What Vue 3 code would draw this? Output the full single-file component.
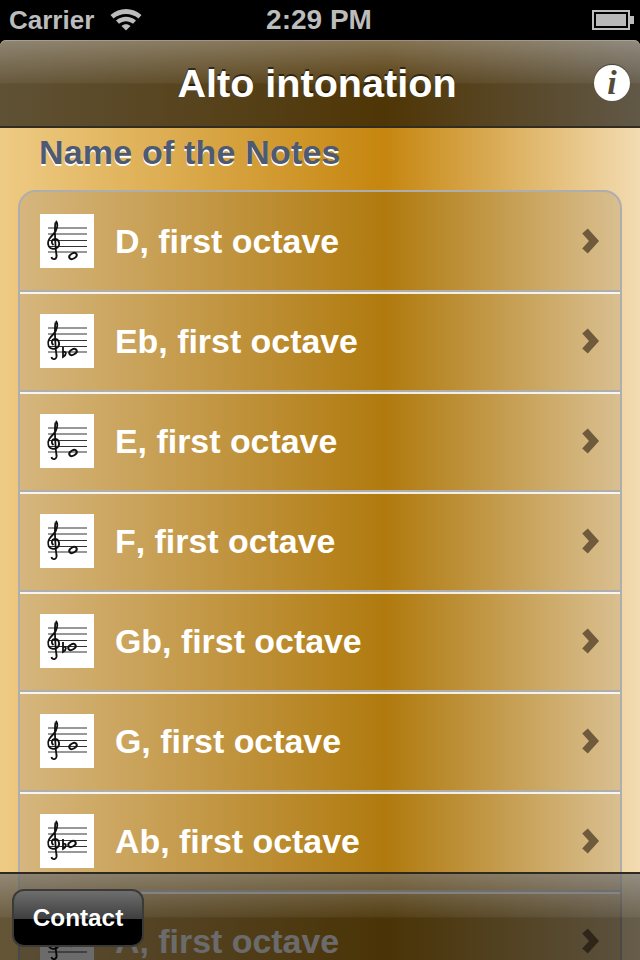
<template>
  <div class="screen">
    <div class="statusbar">
      <div class="carrier">
        <span>Carrier</span>
        <svg class="wifi" width="32" height="24" viewBox="0 0 32 24">
          <path d="M0.500 8C9 0 23 0 31.500 8L28.500 11.500C21.500 5.500 10.500 5.500 3.500 11.500Z" />
          <path d="M6 13.500C12 8.500 20 8.500 26 13.500L23 16.800C18.800 13.300 13.200 13.300 9 16.800Z" />
          <path d="M11.500 19C14.300 16.800 17.700 16.800 20.500 19L16 23.500Z" />
        </svg>
      </div>
      <div class="clock">2:29 PM</div>
      <div class="battery"><div class="shell"><span class="level"></span></div><span class="tip"></span></div>
    </div>

    <header class="navbar">
      <h1>Alto intonation</h1>
      <div class="info">i</div>
    </header>

    <main class="content">
      <div class="heading">Name of the Notes</div>
      <ul class="table">
        <li v-for="note in notes" :key="note.name" class="row">
          <div class="thumb">
            <svg width="54" height="54" viewBox="0 0 54 54">
              <g stroke="#333" stroke-width="1.200">
                <line v-for="y in staff" :key="y" x1="8" x2="47" :y1="y" :y2="y" />
              </g>
              <path class="clef" d="M16.500 40C17.500 46 12 46.500 11.500 43M15.500 8.500C14.500 13 15 30 16.500 42M15.800 7C19 10 16.500 17 13.500 20C9.500 24 7 27 8.500 31.500C10 35.500 15.500 36 18 33C20.500 30 18.500 24.500 14.500 25C11.500 25.500 10.800 29 13.500 31" />
              <path v-if="note.flat" class="flat" :d="`M${note.flatX} ${note.y - 5}V${note.y + 5}C${note.flatX + 3.500} ${note.y + 3} ${note.flatX + 4} ${note.y - 1} ${note.flatX} ${note.y}`" />
              <ellipse class="head" :cx="note.x" :cy="note.y" rx="4" ry="2.600" :transform="`rotate(-30 ${note.x} ${note.y})`" />
            </svg>
          </div>
          <span class="label">{{ note.name }}</span>
          <svg class="chevron" width="20" height="28" viewBox="0 0 20 28">
            <path d="M5 4L14 14L5 24" />
          </svg>
        </li>
      </ul>
    </main>

    <footer class="toolbar">
      <button class="contact">Contact</button>
    </footer>
  </div>
</template>

<script setup>
// top and bottom staff lines sit between pixels, the scaled image blurs them
const staff = [14, 20, 26.5, 32.5, 38]

const notes = [
  { name: 'D, first octave', x: 33, y: 42 },
  { name: 'Eb, first octave', x: 33, y: 38, flat: true, flatX: 23 },
  { name: 'E, first octave', x: 33, y: 39 },
  { name: 'F, first octave', x: 33, y: 36 },
  { name: 'Gb, first octave', x: 32, y: 33, flat: true, flatX: 23 },
  { name: 'G, first octave', x: 33, y: 32 },
  { name: 'Ab, first octave', x: 32, y: 30, flat: true, flatX: 23 },
  { name: 'A, first octave', x: 33, y: 29 }
]
</script>

<style>
html, body { margin: 0; background: #000; }
</style>

<style scoped>
.screen { position: relative; width: 640px; height: 960px; overflow: hidden; background: #000; font-family: "Liberation Sans", Arial, sans-serif; }

.statusbar { height: 40px; display: grid; grid-template-columns: 1fr auto 1fr; align-items: center; padding: 0 8px; box-sizing: border-box; color: #bcbcbc; font-size: 28px; font-weight: 700; }
.carrier { display: flex; align-items: center; gap: 16px; margin-left: 1px; font-size: 26px; }
.wifi { fill: #bcbcbc; margin-top: -2px; }
.clock { margin-left: -2px; }
.battery { justify-self: end; display: flex; align-items: center; margin-right: -2px; }
.shell { width: 38px; height: 20px; box-sizing: border-box; border: 2px solid #bcbcbc; padding: 2px; }
.level { display: block; height: 100%; background: #b8b8b8; }
.tip { display: block; width: 4px; height: 8px; background: #bcbcbc; }

.navbar { height: 88px; box-sizing: border-box; display: flex; align-items: center; justify-content: center; position: relative; border-radius: 6px 6px 0 0; border-bottom: 2px solid #332c20; box-shadow: inset 0 1px 0 rgba(255,255,255,.22); background: linear-gradient(180deg, rgba(255,255,255,.3) 0, rgba(255,255,255,.05) 50%, rgba(255,255,255,0) 51%), linear-gradient(rgba(0,0,0,.6), rgba(0,0,0,.6)), linear-gradient(90deg, #eecb84 0, #c6860f 60%, #f3dcb2 100%); }
h1 { margin: 0 6px -2px 0; color: #fff; font-size: 39.600px; font-weight: 700; line-height: 1; text-shadow: 0 -2px 0 rgba(0,0,0,.55); }
.info { position: absolute; right: 10px; top: 25px; width: 36px; height: 36px; border-radius: 50%; background: #fff; box-shadow: 0 -1px 1px rgba(0,0,0,.4); color: #544a38; font-family: "Liberation Serif", serif; font-style: italic; font-weight: 700; font-size: 34px; line-height: 36px; text-align: center; }

.content { height: 832px; overflow: hidden; background: linear-gradient(90deg, #eecb84 0, #c6860f 60%, #f3dcb2 100%); }
.heading { height: 62px; padding: 4px 0 0 39px; box-sizing: border-box; color: #4d5a72; font-size: 34px; font-weight: 700; line-height: 40px; letter-spacing: .18px; text-shadow: 0 2px 0 #fff; }
.table { list-style: none; margin: 0 18px; padding: 0; border: 2px solid #aeaeae; border-radius: 18px; overflow: hidden; background: linear-gradient(90deg, #d6b67e 0, #b07a0e 61%, #d9bf90 100%); }
.row { height: 100px; box-sizing: border-box; display: flex; align-items: center; padding-left: 20px; border-bottom: 2px solid #aeaeae; box-shadow: inset 0 2px 0 rgba(255,255,255,.85); }
.row:first-child { box-shadow: none; }
.thumb { width: 54px; height: 54px; background: #fff; flex: none; }
.thumb svg { display: block; }
.clef, .flat { fill: none; stroke: #111; stroke-width: 1.800; }
.head { fill: none; stroke: #111; stroke-width: 2; }
.label { margin-left: 21px; flex: 1; color: #fff; font-size: 33.900px; font-weight: 700; font-kerning: none; }
.chevron { margin-right: 20px; fill: none; stroke: #6f5a3c; stroke-width: 7.500; }

.toolbar { position: absolute; left: 0; right: 0; bottom: 0; height: 88px; box-sizing: border-box; border-top: 2px solid #2f2a20; background: linear-gradient(180deg, rgba(255,255,255,.3) 0, rgba(255,255,255,.06) 50%, rgba(255,255,255,0) 51%), linear-gradient(rgba(0,0,0,.58), rgba(0,0,0,.58)); padding: 15px 0 0 12px; }
.contact { display: block; width: 132px; height: 58px; padding: 0; border: 2px solid #3a3a36; border-radius: 12px; color: #fff; font: 700 24.300px "Liberation Sans", Arial, sans-serif; background: linear-gradient(180deg, #6e6e6e 0, #3f3f3f 51%, #000 52%, #000 100%); }
</style>
